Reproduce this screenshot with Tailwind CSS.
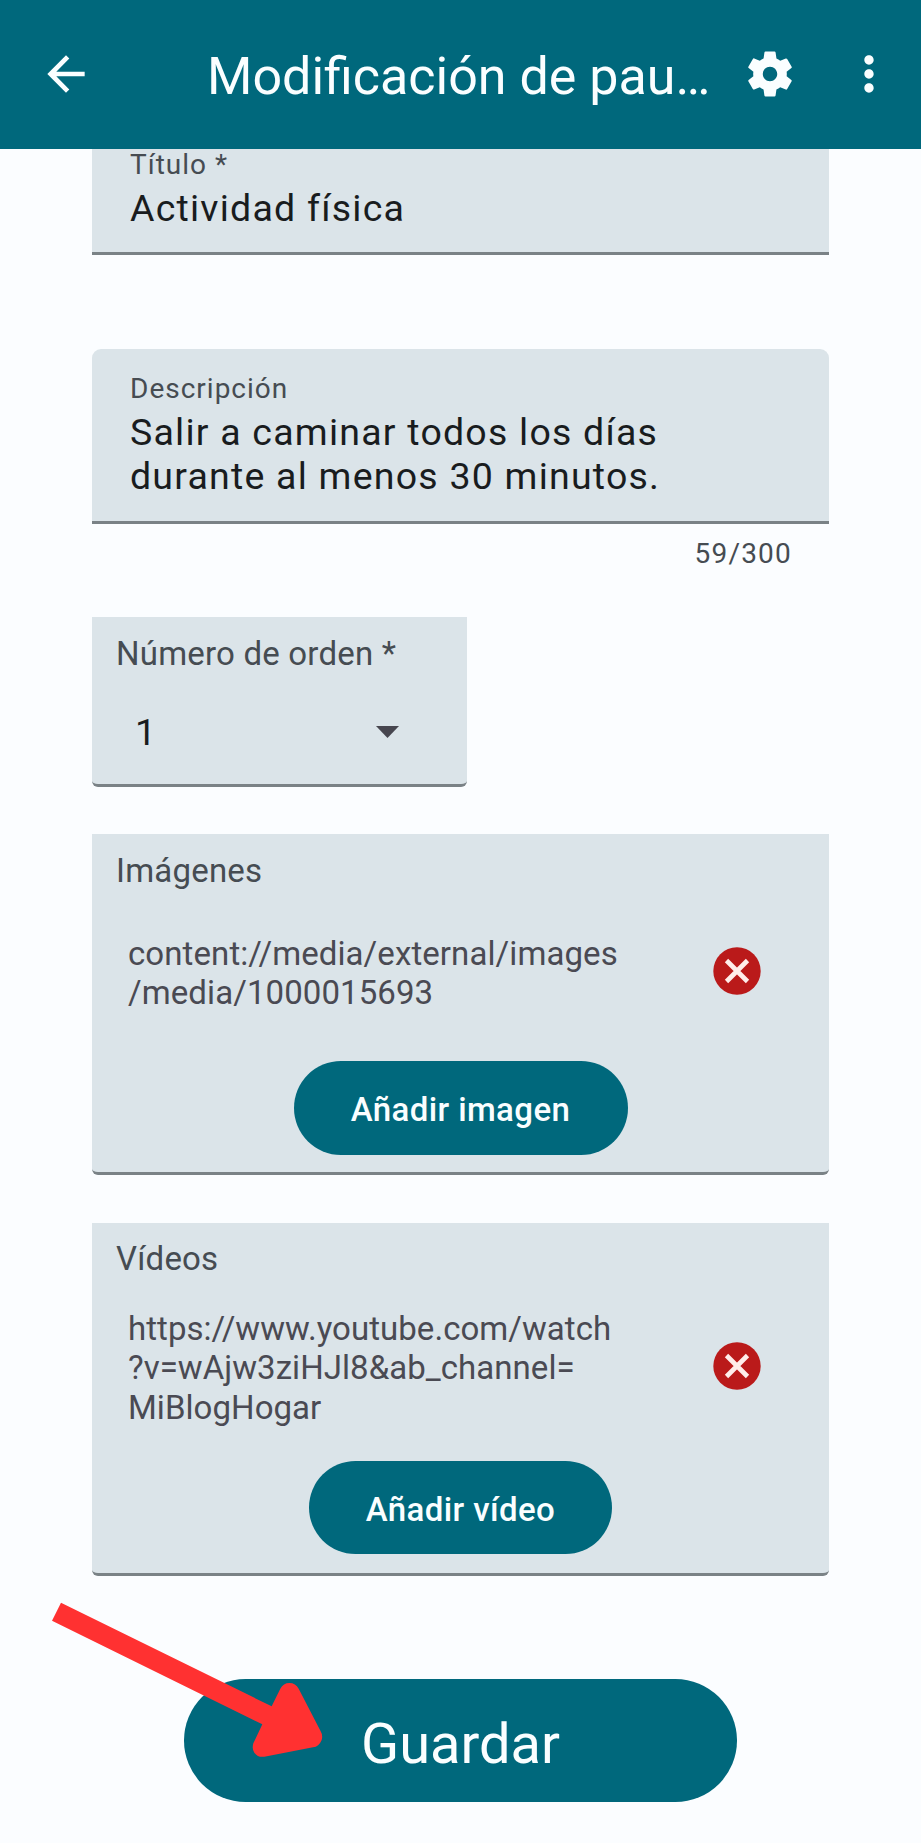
<!DOCTYPE html>
<html lang="es">
<head>
<meta charset="utf-8">
<title>Modificación de pauta</title>
<script src="https://cdn.jsdelivr.net/npm/@tailwindcss/browser@4"></script>
</head>
<body class="relative w-[921px] h-[1843px] overflow-hidden bg-[#fbfdff] font-['Roboto',sans-serif] text-[#464c52]">
  <header class="flex h-[149px] items-center bg-[#00687c] text-[#fafeff]">
    <svg class="ml-[38px] mb-[1px] size-[56px] shrink-0" viewBox="0 0 24 24" fill="currentColor"><path d="M20 11H7.830l5.590-5.590L12 4l-8 8 8 8 1.410-1.410L7.830 13H20v-2z"/></svg>
    <h1 class="ml-[113px] mt-[5px] w-[509px] shrink-0 whitespace-nowrap text-[52px] leading-[62px]">Modificación de pau…</h1>
    <svg class="ml-[26px] mb-[1px] size-[56px] shrink-0" viewBox="0 0 24 24" fill="currentColor"><path d="M19.140 12.940c.04-.3.06-.61.06-.94 0-.32-.02-.64-.07-.94l2.030-1.580c.18-.14.23-.41.12-.61l-1.920-3.320c-.12-.22-.37-.29-.59-.22l-2.390.96c-.5-.38-1.030-.7-1.620-.94l-.36-2.540c-.04-.24-.24-.41-.48-.41h-3.840c-.24 0-.43.17-.47.41l-.36 2.540c-.59.24-1.130.57-1.620.94l-2.390-.96c-.22-.08-.47 0-.59.22L2.740 8.870c-.12.21-.08.47.12.61l2.030 1.580c-.05.3-.09.63-.09.94s.02.64.07.94l-2.030 1.580c-.18.14-.23.41-.12.61l1.920 3.320c.12.22.37.29.59.22l2.390-.96c.5.38 1.030.7 1.620.94l.36 2.540c.05.24.24.41.48.41h3.840c.24 0 .44-.17.47-.41l.36-2.540c.59-.24 1.130-.56 1.620-.94l2.390.96c.22.08.47 0 .59-.22l1.920-3.320c.12-.22.07-.47-.12-.61l-2.010-1.580zM12 15.100c-1.710 0-3.100-1.390-3.100-3.100s1.390-3.100 3.100-3.100 3.100 1.390 3.100 3.100-1.390 3.100-3.100 3.100z"/></svg>
    <svg class="ml-[43px] mb-[1px] size-[56px] shrink-0" viewBox="0 0 24 24" fill="currentColor"><path d="M12 8c1.100 0 2-.9 2-2s-.9-2-2-2-2 .9-2 2 .9 2 2 2zm0 2c-1.100 0-2 .9-2 2s.9 2 2 2 2-.9 2-2-.9-2-2-2zm0 6c-1.100 0-2 .9-2 2s.9 2 2 2 2-.9 2-2-.9-2-2-2z"/></svg>
  </header>

  <main class="flex flex-col px-[92px]">
    <section class="flex h-[106px] flex-col border-b-3 border-[#7a8286] bg-[#dbe4e9] px-[38px]">
      <label class="text-[28px] leading-[32px] tracking-[1px]">Título *</label>
      <p class="mt-[5px] text-[37.500px] leading-[44px] tracking-[1.220px] text-[#191c1e]">Actividad física</p>
    </section>

    <section class="mt-[94px] flex h-[175px] flex-col rounded-t-[9px] border-b-3 border-[#7a8286] bg-[#dbe4e9] px-[38px] pt-[24px]">
      <label class="text-[28px] leading-[32px] tracking-[1px]">Descripción</label>
      <p class="mt-[5px] text-[37.500px] leading-[44px] tracking-[1.220px] text-[#191c1e]">Salir a caminar todos los días<br>durante al menos 30 minutos.</p>
    </section>
    <p class="mt-[14px] pr-[37px] text-right text-[28px] leading-[32px] tracking-[1.200px]">59/300</p>

    <section class="mt-[47px] flex h-[170px] w-[375px] flex-col rounded-b-[6px] border-b-3 border-[#7a8286] bg-[#dbe4e9] px-[24px] pt-[17px]">
      <label class="text-[33px] leading-[40px] tracking-[0.200px]">Número de orden *</label>
      <div class="mt-[36px] flex items-center justify-between pl-[19px] pr-[44px]">
        <span class="text-[37.500px] leading-[44px] text-[#191c1e]">1</span>
        <svg class="h-[12px] w-[23px]" viewBox="0 0 23 12" fill="#47464f"><path d="M0 0h23L11.500 12z"/></svg>
      </div>
    </section>

    <section class="mt-[47px] flex h-[341px] flex-col rounded-b-[6px] border-b-3 border-[#7a8286] bg-[#dbe4e9] px-[24px] pt-[17px]">
      <h2 class="text-[33px] leading-[40px] tracking-[0.200px]">Imágenes</h2>
      <div class="mt-[43px] flex items-center justify-between pl-[12px] pr-[44px]">
        <p class="text-[33px] leading-[39.400px] tracking-[0.090px] text-[#4a4a53]">content://media/external/images<br>/media/1000015693</p>
        <svg class="-mt-[4px] size-[48px] shrink-0" viewBox="0 0 48 48"><circle cx="24" cy="24" r="23.700" fill="#ba1a1a"/><path d="M13.500 13.500l21 21M34.500 13.500l-21 21" stroke="#ffedea" stroke-width="4.700"/></svg>
      </div>
      <button class="mt-[48px] h-[94px] w-[334px] self-center rounded-full bg-[#00687c] pt-[4px] text-[33px] font-medium leading-[40px] tracking-[0.400px] text-[#fafeff]">Añadir imagen</button>
    </section>

    <section class="mt-[48px] flex h-[353px] flex-col rounded-b-[6px] border-b-3 border-[#7a8286] bg-[#dbe4e9] px-[24px] pt-[16px]">
      <h2 class="text-[33px] leading-[40px] tracking-[0.200px]">Vídeos</h2>
      <div class="mt-[30px] flex items-center justify-between pl-[12px] pr-[44px]">
        <p class="text-[33px] leading-[39.400px] tracking-[0.050px] text-[#4a4a53]">https://www.youtube.com/watch<br>?v=wAjw3ziHJl8&amp;ab_channel=<br>MiBlogHogar</p>
        <svg class="-mt-[4px] size-[48px] shrink-0" viewBox="0 0 48 48"><circle cx="24" cy="24" r="23.700" fill="#ba1a1a"/><path d="M13.500 13.500l21 21M34.500 13.500l-21 21" stroke="#ffedea" stroke-width="4.700"/></svg>
      </div>
      <button class="mt-[34px] h-[93px] w-[303px] self-center rounded-full bg-[#00687c] pt-[4px] text-[33px] font-medium leading-[40px] tracking-[0.400px] text-[#fafeff]">Añadir vídeo</button>
    </section>

    <button class="mt-[103px] h-[123px] w-[553px] self-center rounded-full bg-[#00687c] pt-[6px] text-[56px] leading-[64px] text-[#fafeff]">Guardar</button>
  </main>

  <!-- Pointer over the save button -->
  <svg class="absolute left-[30px] top-[1590px] h-[180px] w-[300px]" viewBox="0 0 900 540" fill="#ff3131"><path d="M93 38L725 349L751 296Q760 279 778 279Q797 279 806 296L872 424Q880 438 874 452Q867 469 849 472L703 500Q684 503 673 488Q665 476 670 460L697 403L66 92Z"/></svg>
</body>
</html>
